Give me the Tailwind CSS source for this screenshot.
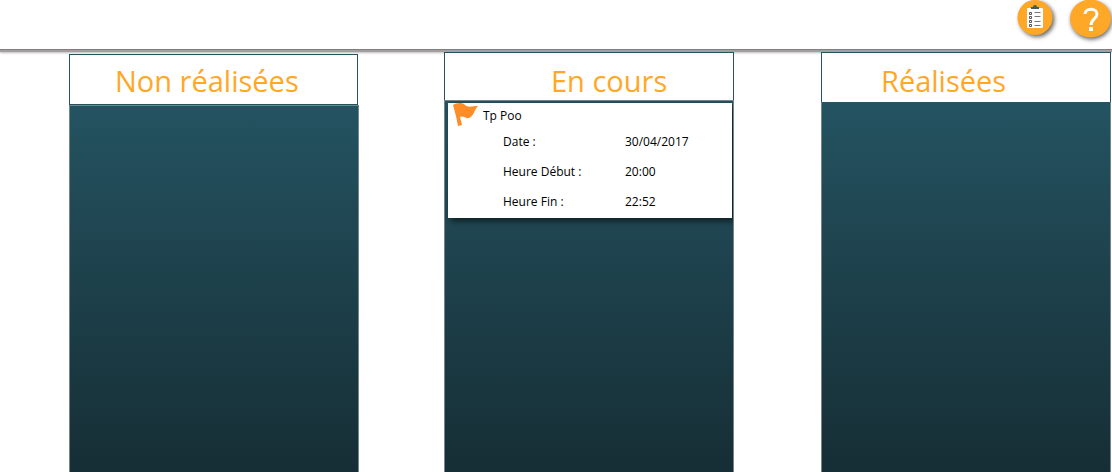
<!DOCTYPE html>
<html lang="fr">
<head>
<meta charset="utf-8">
<meta name="viewport" content="width=device-width, initial-scale=1">
<title>Tâches</title>
<script src="https://cdn.jsdelivr.net/npm/@tailwindcss/browser@4"></script>
</head>
<body class="flex min-h-screen flex-col overflow-hidden bg-white font-['Open_Sans','Noto_Sans',sans-serif] text-black">
<header class="flex h-[52px] items-start justify-end gap-4 border-b-2 border-[#a39fa0] bg-white pr-px shadow-[0_1px_2px_#bbb,inset_0_-1px_0_#7f7f7f]">
  <button type="button" aria-label="Liste des tâches" class="block size-9 rounded-full drop-shadow-[2px_2px_2px_rgba(0,0,0,0.6)]">
    <svg viewBox="0 0 36 36" class="size-full overflow-visible" aria-hidden="true">
      <circle cx="18" cy="17.500" r="17.500" fill="#ffa726"/>
      <rect x="10" y="8" width="16" height="20" rx="1" fill="#fff"/>
      <path d="M14 9V7h2a2 2 0 0 1 4 0h2v2z" fill="#455a64"/>
      <path d="M12.500 12.500h2v2h-2zM12.500 16.500h2v2h-2zM12.500 20.500h2v2h-2zM12.500 24.500h2v2h-2z" fill="none" stroke="#555"/>
      <path d="M17.500 12.500h6M17.500 16.500h6M17.500 21.500h6M17.500 25.500h6" stroke="#777"/>
    </svg>
  </button>
  <button type="button" aria-label="Aide" class="block size-[42px] rounded-full drop-shadow-[1px_2px_2px_rgba(0,0,0,0.6)]">
    <svg viewBox="0 0 42 42" class="size-full overflow-visible" aria-hidden="true">
      <ellipse cx="21.500" cy="18.500" rx="20.500" ry="19" fill="#ffa726"/>
      <path d="M16 14c0-6.500 12-6.500 12 0 0 5-6 5-6 11" fill="none" stroke="#fff" stroke-width="3"/>
      <rect x="20" y="27" width="4" height="4" fill="#fff"/>
    </svg>
  </button>
</header>
<main class="grid flex-1 grid-cols-3 gap-x-[86px] pr-px pl-[69px]">
  <section class="flex flex-col pt-[2px]">
    <h2 class="mr-px h-[51px] border border-[#24525f] bg-white pl-[45px] text-[29px]/[52px] text-[#ffa726]">Non réalisées</h2>
    <div class="flex-1 border border-b-0 border-[#76848b] bg-linear-to-b from-[#245361] to-[#162e35]"></div>
  </section>
  <section class="mr-px -ml-px flex flex-col">
    <h2 class="h-12 border border-b-0 border-[#24525f] bg-white pl-[106px] text-[29px]/[56px] text-[#ffa726]">En cours</h2>
    <div class="flex-1 overflow-hidden border border-b-0 border-[#76848b] bg-linear-to-b from-[#245361] to-[#162e35] pt-[2px] pr-px pl-[3px]">
      <article class="bg-white pb-px text-xs shadow-[3px_3px_6px_rgba(0,0,0,0.6)]">
        <h3 class="flex h-6 items-start gap-1 pl-1 leading-[26px]">
          <svg viewBox="0 0 27 24" class="h-6 w-[27px]" aria-hidden="true"><path d="M1 2C4 0 10-1 13 2c3 3 8 1 13 1-4 4-4 10-9 12-3 1-6-3-9-1l2 8-4 1L4 13z" fill="#ff8c26"/></svg>
          Tp Poo
        </h3>
        <dl class="grid grid-cols-[122px_1fr] pl-[55px] leading-[30px]">
          <dt>Date :</dt><dd>30/04/2017</dd>
          <dt>Heure Début :</dt><dd>20:00</dd>
          <dt>Heure Fin :</dt><dd>22:52</dd>
        </dl>
      </article>
    </div>
  </section>
  <section class="flex flex-col">
    <h2 class="h-[50px] border border-b-0 border-[#24525f] bg-white pl-[59px] text-[29px]/[56px] text-[#ffa726]">Réalisées</h2>
    <div class="flex-1 border-x border-[#76848b] bg-linear-to-b from-[#245361] to-[#162e35]"></div>
  </section>
</main>
</body>
</html>
